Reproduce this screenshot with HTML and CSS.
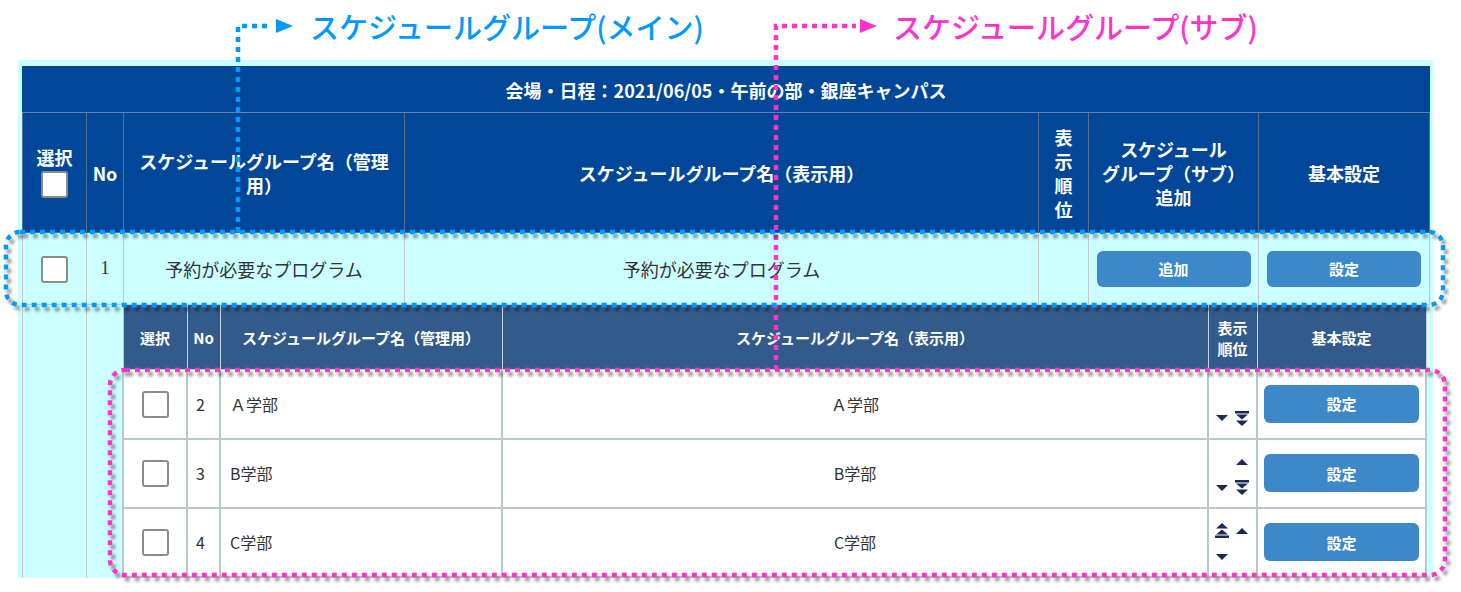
FILE: index.html
```html
<!DOCTYPE html>
<html lang="ja">
<head>
<meta charset="utf-8">
<title>スケジュールグループ一覧</title>
<link rel="stylesheet" href="styles.css">
</head>
<body>
<div class="page">
  <div class="frame">
    <table class="main">
      <colgroup>
        <col class="w64"><col class="w37"><col class="w281"><col class="w634"><col class="w50"><col class="w170"><col class="w171">
      </colgroup>
      <thead>
        <tr class="title-row">
          <th colspan="7">会場・日程：2021/06/05・午前の部・銀座キャンパス</th>
        </tr>
        <tr class="head-row">
          <th><div class="sel-head"><span>選択</span><input type="checkbox" class="cb"></div></th>
          <th>No</th>
          <th>スケジュールグループ名（管理<br>用）</th>
          <th>スケジュールグループ名（表示用）</th>
          <th>表<br>示<br>順<br>位</th>
          <th>スケジュール<br>グループ（サブ）<br>追加</th>
          <th>基本設定</th>
        </tr>
      </thead>
      <tbody>
        <tr class="group-row">
          <td><input type="checkbox" class="cb"></td>
          <td class="serif">1</td>
          <td>予約が必要なプログラム</td>
          <td>予約が必要なプログラム</td>
          <td></td>
          <td><button class="btn">追加</button></td>
          <td><button class="btn">設定</button></td>
        </tr>
        <tr class="nest-row">
          <td></td>
          <td></td>
          <td colspan="5" class="nest-cell">
            <table class="sub">
              <colgroup>
                <col class="w64"><col class="w33"><col class="w282"><col class="w706"><col class="w49"><col class="w169">
              </colgroup>
              <thead>
                <tr>
                  <th>選択</th>
                  <th>No</th>
                  <th>スケジュールグループ名（管理用）</th>
                  <th>スケジュールグループ名（表示用）</th>
                  <th class="tight">表示<br>順位</th>
                  <th>基本設定</th>
                </tr>
              </thead>
              <tbody>
                <tr>
                  <td class="center"><input type="checkbox" class="cb"></td>
                  <td class="num">2</td>
                  <td class="name">Ａ学部</td>
                  <td class="center">Ａ学部</td>
                  <td>
                    <div class="order">
                      <span></span><span></span>
                      <svg class="ic" width="12" height="6" viewBox="0 0 12 6"><polygon points="0,0 12,0 6,6"/></svg>
                      <svg class="ic" width="14" height="15" viewBox="0 0 14 15"><rect x="0" y="0" width="14" height="2.5"/><polygon points="1,3.5 13,3.5 7,8.5"/><polygon points="1,9.5 13,9.5 7,15"/></svg>
                    </div>
                  </td>
                  <td class="center"><button class="btn tall">設定</button></td>
                </tr>
                <tr>
                  <td class="center"><input type="checkbox" class="cb"></td>
                  <td class="num">3</td>
                  <td class="name">B学部</td>
                  <td class="center">B学部</td>
                  <td>
                    <div class="order">
                      <span></span>
                      <svg class="ic" width="12" height="6" viewBox="0 0 12 6"><polygon points="0,6 12,6 6,0"/></svg>
                      <svg class="ic" width="12" height="6" viewBox="0 0 12 6"><polygon points="0,0 12,0 6,6"/></svg>
                      <svg class="ic" width="14" height="15" viewBox="0 0 14 15"><rect x="0" y="0" width="14" height="2.5"/><polygon points="1,3.5 13,3.5 7,8.5"/><polygon points="1,9.5 13,9.5 7,15"/></svg>
                    </div>
                  </td>
                  <td class="center"><button class="btn tall">設定</button></td>
                </tr>
                <tr>
                  <td class="center"><input type="checkbox" class="cb"></td>
                  <td class="num">4</td>
                  <td class="name">C学部</td>
                  <td class="center">C学部</td>
                  <td>
                    <div class="order">
                      <svg class="ic" width="14" height="15" viewBox="0 0 14 15"><polygon points="1,5.5 13,5.5 7,0"/><polygon points="1,11.5 13,11.5 7,6.5"/><rect x="0" y="12.5" width="14" height="2.5"/></svg>
                      <svg class="ic" width="12" height="6" viewBox="0 0 12 6"><polygon points="0,6 12,6 6,0"/></svg>
                      <svg class="ic" width="12" height="6" viewBox="0 0 12 6"><polygon points="0,0 12,0 6,6"/></svg>
                      <span></span>
                    </div>
                  </td>
                  <td class="center"><button class="btn tall">設定</button></td>
                </tr>
              </tbody>
            </table>
          </td>
        </tr>
      </tbody>
    </table>
  </div>
</div>

<!-- callouts drawn over the table -->
<div class="label label-main">スケジュールグループ(メイン)</div>
<div class="label label-sub">スケジュールグループ(サブ)</div>
<svg class="marks" width="1461" height="592" viewBox="0 0 1461 592">
  <defs>
    <filter id="shade" x="-5%" y="-20%" width="110%" height="140%">
      <feDropShadow dx="3" dy="4" stdDeviation="1.5" flood-color="#000" flood-opacity="0.4"/>
    </filter>
  </defs>
  <path class="line-blue" d="M238 232 V26 H272"/>
  <polygon class="fill-blue" points="276,19 293,26 276,33"/>
  <path class="line-pink" d="M776 370 V26 H856"/>
  <polygon class="fill-pink" points="860,19 877,26 860,33"/>
  <rect class="line-blue" filter="url(#shade)" x="6" y="232" width="1437" height="73" rx="14"/>
  <rect class="line-pink" filter="url(#shade)" x="110" y="370" width="1335" height="205" rx="15"/>
</svg>
</body>
</html>
```

FILE: styles.css
```css
* { box-sizing: border-box; }

html, body {
  margin: 0;
  padding: 0;
  background: #fff;
}

body {
  position: relative;
  width: 1461px;
  height: 592px;
  overflow: hidden;
  font-family: "Noto Sans CJK JP", "Noto Sans", sans-serif;
  color: #333;
}

.page {
  padding: 60px 0 0 18px;
}

.frame {
  width: 1415px;
  background: #ccffff;
  padding: 6px 4px 0 4px;
}

table {
  border-collapse: collapse;
  table-layout: fixed;
}

/* column widths */
.w64 { width: 64px; }
.w37 { width: 37px; }
.w281 { width: 281px; }
.w634 { width: 634px; }
.w50 { width: 50px; }
.w170 { width: 170px; }
.w171 { width: 171px; }
.w33 { width: 33px; }
.w282 { width: 282px; }
.w706 { width: 706px; }
.w49 { width: 49px; }
.w169 { width: 169px; }

/* main table */
.main {
  width: 1407px;
}

.main th {
  background: #00479a;
  color: #fff;
  font-weight: 700;
  font-size: 18px;
  line-height: 24px;
  text-align: center;
  vertical-align: middle;
  border: 1px solid #56708f;
  padding: 0;
}

.title-row th {
  height: 46px;
  font-size: 18px;
  border-color: #00479a #00479a #6a83a3;
}

.head-row th {
  height: 120px;
}

.sel-head {
  display: flex;
  flex-direction: column;
  align-items: center;
  gap: 2px;
  padding-bottom: 2px;
}

.group-row td {
  height: 72px;
  background: #ccffff;
  border: 1px solid #c4c8c8;
  font-size: 18px;
  text-align: center;
  vertical-align: middle;
  padding: 0;
}

.serif {
  font-family: "Liberation Serif", "Noto Sans CJK JP", serif;
}

.nest-row > td {
  background: #ccffff;
  border: 1px solid #c4c8c8;
  border-bottom: none;
  padding: 0;
}

.nest-row > td.nest-cell {
  border: none;
  padding: 0;
  vertical-align: top;
}

/* checkbox */
.cb {
  appearance: none;
  -webkit-appearance: none;
  display: inline-block;
  width: 27px;
  height: 27px;
  margin: 0;
  background: #fff;
  border: 2px solid #8c8c8c;
  border-radius: 3px;
  vertical-align: middle;
}

/* buttons */
.btn {
  width: 154px;
  height: 36px;
  border: none;
  border-radius: 6px;
  background: #3c88c8;
  color: #fff;
  font-family: inherit;
  font-size: 15px;
  font-weight: 700;
  vertical-align: middle;
  padding: 0;
}

.btn.tall {
  width: 155px;
  height: 38px;
}

/* nested table */
.sub {
  width: 1303px;
  margin-left: -2px;
}

.sub th {
  height: 64px;
  background: #325b8b;
  color: #fff;
  font-size: 15px;
  font-weight: 700;
  line-height: 22px;
  text-align: center;
  vertical-align: middle;
  border: 1px solid #c9d2dc;
  border-top-color: #325b8b;
  padding: 0;
}

.sub th.tight {
  line-height: 21px;
}

.sub td {
  height: 69px;
  background: #fff;
  border: 2px solid #b7c9c9;
  font-size: 16px;
  vertical-align: middle;
  padding: 0;
}

.sub tbody tr:first-child td {
  border-top: none;
}

.sub td.center {
  text-align: center;
}

.sub td.num {
  padding-left: 8px;
}

.sub td.name {
  padding-left: 9px;
}

/* ordering arrows */
.order {
  display: grid;
  grid-template-columns: 14px 18px;
  grid-template-rows: 20px 20px;
  column-gap: 4px;
  row-gap: 6px;
  justify-content: center;
  align-items: center;
  justify-items: center;
  padding-top: 3px;
}

.ic {
  display: block;
  fill: #1b2a55;
}

/* callouts */
.label {
  position: absolute;
  top: 10px;
  font-size: 29px;
  font-weight: 500;
  line-height: 32px;
  white-space: nowrap;
}

.label-main {
  left: 310px;
  color: #0099ff;
}

.label-sub {
  left: 893px;
  color: #ff33cc;
}

.marks {
  position: absolute;
  left: 0;
  top: 0;
  pointer-events: none;
}

.line-blue {
  fill: none;
  stroke: #0099ff;
  stroke-width: 4.5;
  stroke-dasharray: 5 5;
}

.line-pink {
  fill: none;
  stroke: #ff33cc;
  stroke-width: 4.5;
  stroke-dasharray: 5 5;
}

.fill-blue { fill: #0099ff; }
.fill-pink { fill: #ff33cc; }
```
